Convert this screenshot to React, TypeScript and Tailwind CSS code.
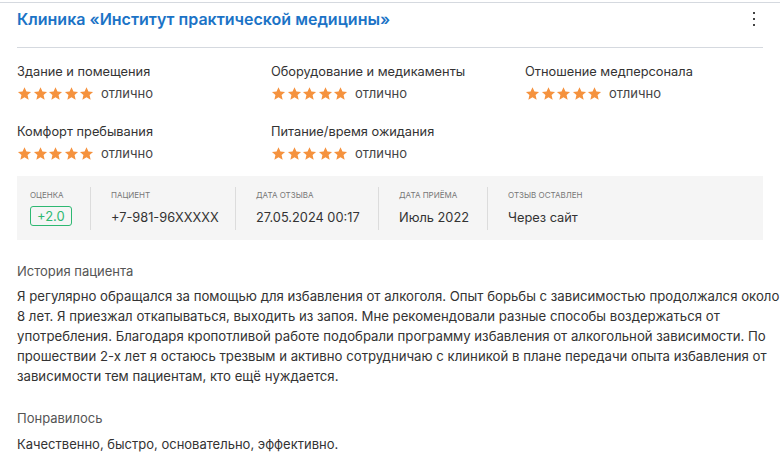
import React from "react";

const ratings = [
  { label: "Здание и помещения", value: "отлично" },
  { label: "Оборудование и медикаменты", value: "отлично" },
  { label: "Отношение медперсонала", value: "отлично" },
  { label: "Комфорт пребывания", value: "отлично" },
  { label: "Питание/время ожидания", value: "отлично" },
];

const meta = [
  { label: "Пациент", value: "+7-981-96XXXXX", w: "w-[145px]" },
  { label: "Дата отзыва", value: "27.05.2024 00:17", w: "w-[143px]" },
  { label: "Дата приёма", value: "Июль 2022", w: "w-[109px]" },
  { label: "Отзыв оставлен", value: "Через сайт", w: "" },
];

function Star() {
  return (
    <svg viewBox="0 0 24 24" className="h-[15px] w-[15px]" fill="#f5923e">
      <path d="M12 1.8l3.1 6.9 7.4.7-5.6 5 1.7 7.4L12 17.9l-6.6 3.9 1.7-7.4-5.6-5 7.4-.7z" />
    </svg>
  );
}

export default function App() {
  return (
    <div
      className="min-h-screen bg-white text-[#333]"
      style={{ fontFamily: "Inter, 'Noto Sans', sans-serif" }}
    >
      <div className="h-[2px]" />
      <div className="border-t border-[#d5d9df] px-[17px]">
        <div className="flex h-[44px] items-start justify-between pt-[6px]">
          <h1 className="text-[16px] font-semibold leading-[20px] text-[#1b73c6]">
            Клиника «Институт практической медицины»
          </h1>
          <div className="mr-[8px] mt-[3px] flex flex-col gap-[4px]">
            <span className="h-[2px] w-[2px] bg-[#444]" />
            <span className="h-[2px] w-[2px] bg-[#444]" />
            <span className="h-[2px] w-[2px] bg-[#444]" />
          </div>
        </div>
        <div className="h-px bg-[#d5d9df]" />

        <div className="grid grid-cols-[254px_254px_1fr] gap-y-[21px] pt-[15px]">
          {ratings.map((r) => (
            <div key={r.label}>
              <p className="text-[12.8px] leading-[18px] text-[#333]">{r.label}</p>
              <div className="mt-[3px] flex items-center">
                <div className="flex gap-[0.5px]">
                  {[0, 1, 2, 3, 4].map((i) => (
                    <Star key={i} />
                  ))}
                </div>
                <span className="ml-[7px] text-[13px] leading-[18px] text-[#444]">{r.value}</span>
              </div>
            </div>
          ))}
        </div>

        <div className="mt-[14px] flex h-[64px] items-center bg-[#f5f5f5] px-[13px]">
          <div className="w-[61px] border-r border-[#dcdcdc] py-[3px]">
            <p className="text-[8px] uppercase leading-[10px] text-[#777]">Оценка</p>
            <span className="mt-[6px] inline-block rounded-[3px] border border-[#2eb872] px-[6px] text-[13px] leading-[18px] text-[#2eb872]">
              +2.0
            </span>
          </div>
          {meta.map((m, i) => (
            <div
              key={m.label}
              className={`${m.w} ${i < meta.length - 1 ? "border-r border-[#dcdcdc]" : ""} py-[3px] pl-[20px]`}
            >
              <p className="text-[8px] uppercase leading-[10px] text-[#777]">{m.label}</p>
              <p className="mt-[9px] text-[12.8px] leading-[18px] text-[#333]">{m.value}</p>
            </div>
          ))}
        </div>

        <p className="mt-[22px] text-[13px] leading-[18px] text-[#555]">История пациента</p>
        <p className="mt-[6px] w-[764px] text-[13.2px] leading-[20px] text-[#333]">
          Я регулярно обращался за помощью для избавления от алкоголя. Опыт борьбы с зависимостью
          продолжался около 8 лет. Я приезжал откапываться, выходить из запоя. Мне рекомендовали
          разные способы воздержаться от употребления. Благодаря кропотливой работе подобрали
          программу избавления от алкогольной зависимости. По прошествии 2-х лет я остаюсь трезвым
          и активно сотрудничаю с клиникой в плане передачи опыта избавления от зависимости тем
          пациентам, кто ещё нуждается.
        </p>

        <p className="mt-[23px] text-[13px] leading-[18px] text-[#555]">Понравилось</p>
        <p className="mt-[7px] text-[13px] leading-[20px] text-[#333]">
          Качественно, быстро, основательно, эффективно.
        </p>
      </div>
    </div>
  );
}
